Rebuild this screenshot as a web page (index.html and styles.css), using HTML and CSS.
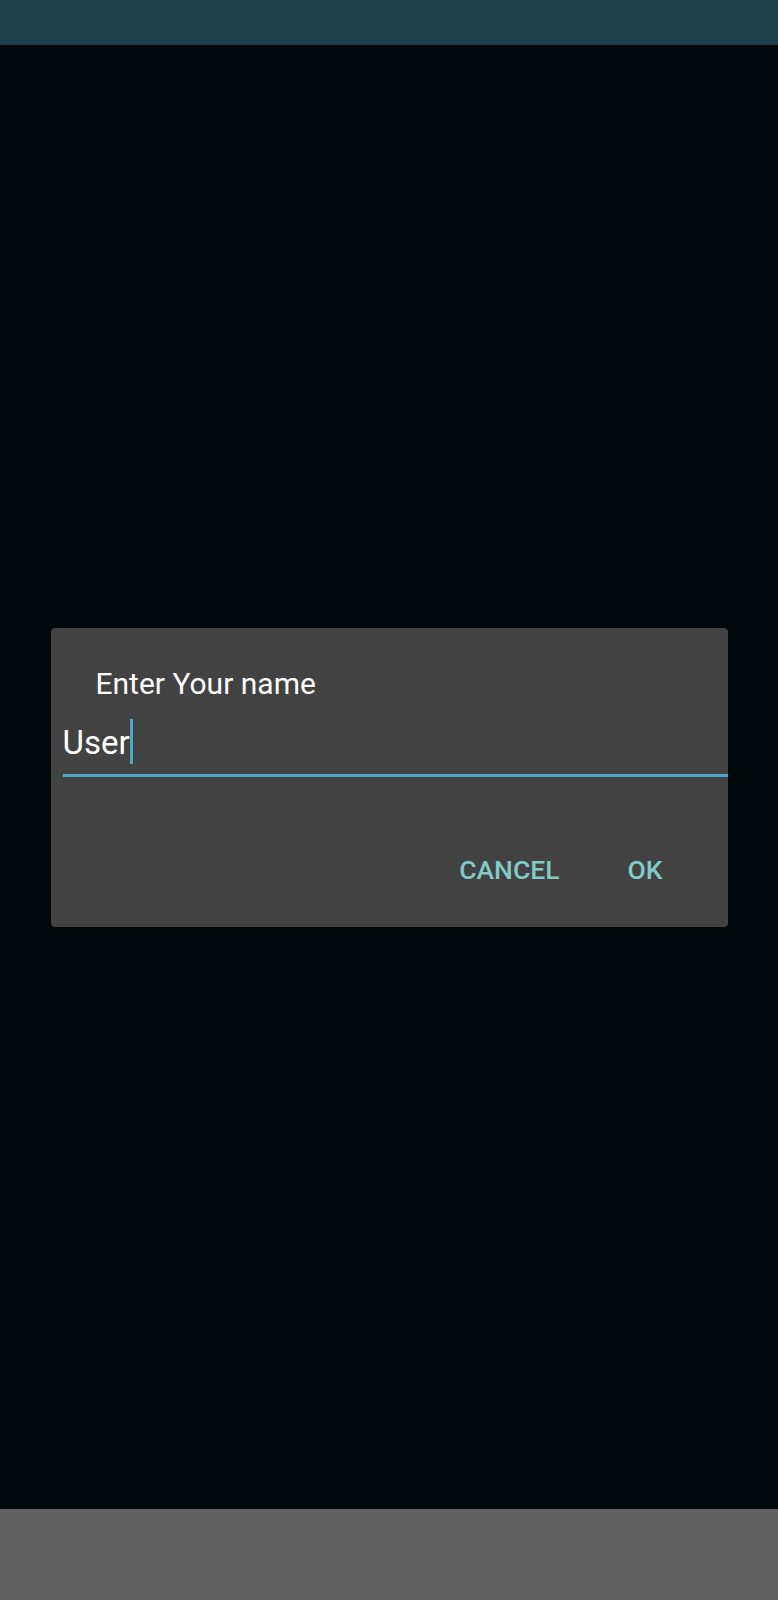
FILE: index.html
```html
<!DOCTYPE html>
<html>
<head>
<meta charset="utf-8">
<link rel="stylesheet" href="styles.css">
</head>
<body>
<div class="screen">
  <div class="status-bar"></div>
  <main class="content">
    <div class="dialog">
      <div class="dialog-title">Enter Your name</div>
      <div class="dialog-input"><span class="input-text">User</span><span class="caret"></span></div>
      <div class="dialog-actions">
        <button class="action-btn">CANCEL</button>
        <button class="action-btn">OK</button>
      </div>
    </div>
  </main>
  <div class="nav-bar"></div>
</div>
</body>
</html>
```

FILE: styles.css
```css
html, body {
  margin: 0;
  padding: 0;
  background: #01080c;
}

.screen {
  width: 778px;
  height: 1600px;
  display: flex;
  flex-direction: column;
  font-family: Roboto, "Noto Sans", sans-serif;
}

.status-bar {
  height: 45px;
  background: #1e3f4c;
  flex: none;
}

.content {
  flex: 1;
  display: flex;
  align-items: center;
  justify-content: center;
  background: #01080c;
}

.nav-bar {
  height: 91px;
  background: #616161;
  flex: none;
}

.dialog {
  width: 677px;
  height: 299px;
  box-sizing: border-box;
  background: #424242;
  border-radius: 4px;
  padding-top: 40px;
  display: flex;
  flex-direction: column;
}

.dialog-title {
  height: 32px;
  line-height: 32px;
  font-size: 30px;
  color: #ffffff;
  padding-left: 45px;
}

.dialog-input {
  margin-top: 23px;
  margin-left: 12px;
  height: 40px;
  line-height: 40px;
  font-size: 33px;
  color: #ffffff;
  padding-bottom: 11px;
  border-bottom: 3px solid #4ea7c8;
  white-space: nowrap;
}

.input-text {
  display: inline-block;
}

.caret {
  display: inline-block;
  width: 3px;
  height: 45px;
  margin-top: -8px;
  margin-left: 0;
  background: #4ea7c8;
  vertical-align: -10px;
}

.dialog-actions {
  margin-top: 77px;
  display: flex;
  justify-content: flex-end;
  gap: 36px;
  padding-right: 49px;
}

.action-btn {
  background: none;
  border: none;
  padding: 0 16px;
  margin: 0;
  height: 32px;
  line-height: 32px;
  font-family: Roboto, "Noto Sans", sans-serif;
  font-size: 26.5px;
  font-weight: 500;
  color: #80cbc4;
}
```
